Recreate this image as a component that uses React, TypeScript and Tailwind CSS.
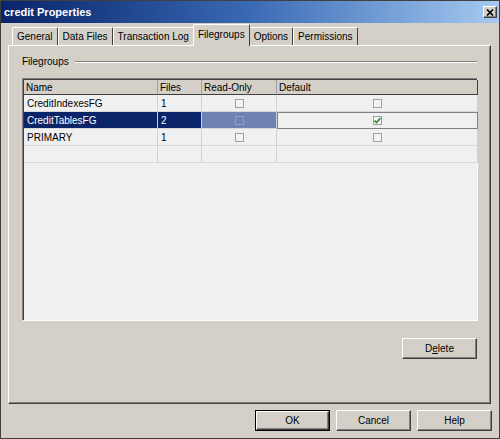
import React from "react";

const raised =
  "border border-t-white border-l-white border-r-[#404040] border-b-[#404040] shadow-[inset_-1px_-1px_0_#808080]";

const Checkbox = ({ checked = false, clear = false }: { checked?: boolean; clear?: boolean }) => (
  <div
    className={`w-[9px] h-[9px] border border-[#a0a0a0] flex items-center justify-center ${
      clear ? "bg-transparent border-[#5a6a90]" : "bg-[#f4f4f4]"
    }`}
  >
    {checked && (
      <svg width="7" height="7" viewBox="0 0 7 7">
        <path d="M0.5 3.5 L2.5 5.5 L6.5 1" stroke="#2f8f2f" strokeWidth="1.6" fill="none" />
      </svg>
    )}
  </div>
);

const tabs = ["General", "Data Files", "Transaction Log", "Filegroups", "Options", "Permissions"];

const rows = [
  { name: "CreditIndexesFG", files: "1", def: false },
  { name: "CreditTablesFG", files: "2", def: true, selected: true },
  { name: "PRIMARY", files: "1", def: false },
];

const App = () => {
  return (
    <div className="w-[500px] h-[439px] bg-[#d4d0c8] flex flex-col border border-[#404040] font-['Liberation_Sans',Arial,sans-serif] text-[10px] text-black leading-none overflow-hidden">
      {/* Title bar */}
      <div className="h-[22px] shrink-0 flex items-center justify-between pl-[3px] pr-[2px] bg-linear-to-r from-[#0a246a] via-[#3a6ab4] to-[#a6caf0]">
        <span className="text-white font-bold text-[11px]">credit Properties</span>
        <div className={`w-[14px] h-[12px] bg-[#d4d0c8] flex items-center justify-center ${raised}`}>
          <svg width="8" height="7" viewBox="0 0 8 7">
            <path d="M1 0.5 L7 6.5 M7 0.5 L1 6.5" stroke="#000" strokeWidth="1.6" />
          </svg>
        </div>
      </div>

      {/* Tabs */}
      <div className="h-[22px] shrink-0 flex items-end pl-[11px]">
        {tabs.map((t) =>
          t === "Filegroups" ? (
            <div
              key={t}
              className="h-[22px] px-[4px] pt-[5px] -mb-[1px] relative z-10 bg-[#d4d0c8] border-l border-t border-white border-r border-r-[#404040] rounded-t-[2px] -mx-[1px]"
            >
              {t}
            </div>
          ) : (
            <div
              key={t}
              className="h-[18px] px-[4px] pt-[4px] border-l border-t border-white border-r border-r-[#404040] rounded-t-[2px]"
            >
              {t}
            </div>
          )
        )}
      </div>

      {/* Panel */}
      <div className="ml-[7px] w-[483px] h-[359px] shrink-0 border border-t-white border-l-white border-r-[#404040] border-b-[#404040] shadow-[inset_-1px_-1px_0_#808080] px-[13px] pt-[11px] flex flex-col">
        <div className="flex items-center gap-[6px]">
          <span>Filegroups</span>
          <div className="flex-1 border-t border-t-[#808080] border-b border-b-white" />
        </div>

        {/* Grid */}
        <div className="mt-[11px] w-[456px] h-[243px] border border-t-[#808080] border-l-[#808080] border-r-white border-b-white bg-[#f0f0f0] shadow-[inset_1px_1px_0_#404040]">
          <div className="ml-[1px] mt-[1px] w-[454px] grid grid-cols-[134px_44px_75px_201px]">
            {["Name", "Files", "Read-Only", "Default"].map((h, i) => (
              <div
                key={h}
                className={`h-[15px] bg-[#d4d0c8] border-b border-b-[#404040] pl-[2px] pt-[3px] ${
                  i < 3 ? "border-r border-r-[#a0a0a0]" : "border-r border-r-[#404040]"
                }`}
              >
                {h}
              </div>
            ))}
            {rows.map((r) => (
              <React.Fragment key={r.name}>
                <div
                  className={`h-[17px] pl-[3px] pt-[4px] border-b border-b-[#d8d8d8] border-r border-r-[#d0d0d0] ${
                    r.selected ? "bg-[#0a246a] text-white" : ""
                  }`}
                >
                  {r.name}
                </div>
                <div
                  className={`h-[17px] pl-[3px] pt-[4px] border-b border-b-[#d8d8d8] border-r border-r-[#d0d0d0] ${
                    r.selected ? "bg-[#0a246a] text-white" : ""
                  }`}
                >
                  {r.files}
                </div>
                <div
                  className={`h-[17px] flex items-center justify-center border-b border-b-[#d8d8d8] border-r border-r-[#d0d0d0] ${
                    r.selected ? "bg-[#6e82b4]" : ""
                  }`}
                >
                  <Checkbox clear={r.selected} />
                </div>
                <div
                  className={`h-[17px] flex items-center justify-center ${
                    r.selected
                      ? "border border-[#808080]"
                      : "border-b border-b-[#d8d8d8] border-r border-r-[#d0d0d0]"
                  }`}
                >
                  <Checkbox checked={r.def} />
                </div>
              </React.Fragment>
            ))}
            {[0, 1, 2, 3].map((i) => (
              <div key={i} className="h-[17px] border-b border-b-[#d8d8d8] border-r border-r-[#d0d0d0]" />
            ))}
          </div>
        </div>

        <div className="flex justify-end mt-[17px]">
          <button className={`w-[75px] h-[21px] bg-[#d4d0c8] flex items-center justify-center ${raised}`}>
            <span>
              D<span className="underline">e</span>lete
            </span>
          </button>
        </div>
      </div>

      {/* Bottom buttons */}
      <div className="flex justify-end gap-[6px] pr-[7px] mt-[6px]">
        <button className="w-[75px] h-[21px] bg-[#d4d0c8] border border-black flex">
          <div className={`flex-1 flex items-center justify-center ${raised}`}>OK</div>
        </button>
        <button className={`w-[75px] h-[21px] bg-[#d4d0c8] flex items-center justify-center ${raised}`}>
          Cancel
        </button>
        <button className={`w-[75px] h-[21px] bg-[#d4d0c8] flex items-center justify-center ${raised}`}>
          Help
        </button>
      </div>
    </div>
  );
};

export default App;
